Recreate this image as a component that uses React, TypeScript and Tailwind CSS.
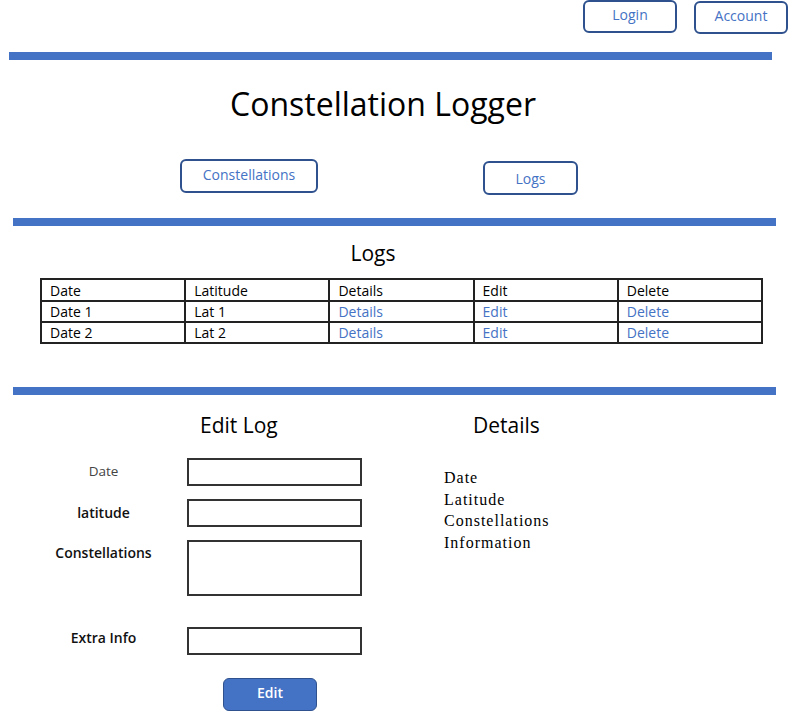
const BLUE = 'bg-[#4472c4]'

function OutlineButton({ label, className }: { label: string; className: string }) {
  return (
    <div
      className={`flex items-center justify-center rounded-[6px] border-2 border-[#2f528f] text-[14px] text-[#4472c4] ${className}`}
    >
      {label}
    </div>
  )
}

function Bar({ className }: { className: string }) {
  return <div className={`h-[8px] ${BLUE} ${className}`} />
}

const rows = [
  ['Date 1', 'Lat 1'],
  ['Date 2', 'Lat 2'],
]

function Field({ label, bold, tall, labelTop }: { label: string; bold?: boolean; tall?: boolean; labelTop: string }) {
  return (
    <div className="flex">
      <div
        className={`w-[187px] pl-[20px] text-center ${bold ? 'text-[14px] font-semibold text-[#111]' : 'text-[13.5px] text-[#444]'} ${labelTop}`}
      >
        {label}
      </div>
      <div className={`w-[175px] border-2 border-[#333] ${tall ? 'h-[56px]' : 'h-[28px]'}`} />
    </div>
  )
}

export default function App() {
  return (
    <div className="relative h-[714px] w-[791px] overflow-hidden bg-white font-['Open_Sans',sans-serif] text-black">
      {/* top account buttons */}
      <div className="flex pl-[583px]">
        <OutlineButton label="Login" className="mt-0 h-[33px] w-[94px] pb-[4px]" />
        <OutlineButton label="Account" className="ml-[17px] mt-[1px] h-[33px] w-[94px] pb-[4px]" />
      </div>

      <Bar className="ml-[9px] mt-[18px] w-[763px]" />

      <h1 className="mt-[24px] pr-[25px] text-center text-[32px] leading-[40px]">Constellation Logger</h1>

      <div className="mt-[35px] flex items-start">
        <OutlineButton label="Constellations" className="ml-[180px] h-[34px] w-[138px] pb-[4px]" />
        <OutlineButton label="Logs" className="ml-[165px] mt-[2px] h-[34px] w-[95px]" />
      </div>

      <Bar className="ml-[13px] mt-[23px] w-[763px]" />

      <h2 className="mt-[12px] pr-[45px] text-center text-[21px] leading-[30px]">Logs</h2>

      {/* logs table */}
      <table className="ml-[40px] mt-[10px] w-[723px] table-fixed border-collapse text-[14px] leading-[19px]">
        <tbody>
          <tr>
            {['Date', 'Latitude', 'Details', 'Edit', 'Delete'].map((h) => (
              <td key={h} className="border-2 border-[#222] px-[8px] pt-[1px]">
                {h}
              </td>
            ))}
          </tr>
          {rows.map(([d, l]) => (
            <tr key={d}>
              <td className="border-2 border-[#222] px-[8px]">{d}</td>
              <td className="border-2 border-[#222] px-[8px]">{l}</td>
              <td className="border-2 border-[#222] px-[8px] text-[#4472c4]">Details</td>
              <td className="border-2 border-[#222] px-[8px] text-[#4472c4]">Edit</td>
              <td className="border-2 border-[#222] px-[8px] text-[#4472c4]">Delete</td>
            </tr>
          ))}
        </tbody>
      </table>

      <Bar className="ml-[13px] mt-[43px] w-[763px]" />

      <div className="flex">
        {/* edit form */}
        <div className="w-[400px]">
          <h2 className="mt-[15px] pl-[200px] text-[21px] leading-[30px]">Edit Log</h2>
          <div className="mt-[18px] flex flex-col">
            <Field label="Date" labelTop="pt-[3px]" />
            <div className="mt-[13px]">
              <Field label="latitude" bold labelTop="pt-[3px]" />
            </div>
            <div className="mt-[13px]">
              <Field label="Constellations" bold labelTop="pt-[2px]" tall />
            </div>
            <div className="mt-[31px]">
              <Field label="Extra Info" bold labelTop="pt-0" />
            </div>
          </div>
          <div className="ml-[223px] mt-[23px] flex h-[33px] w-[94px] items-center justify-center rounded-[6px] border border-[#2f528f] bg-[#4472c4] pb-[4px] text-[14px] font-semibold text-white">
            Edit
          </div>
        </div>

        {/* details */}
        <div>
          <h2 className="mt-[15px] pl-[73px] text-[21px] leading-[30px]">Details</h2>
          <div className="ml-[44px] mt-[27px] font-['Liberation_Serif',serif] text-[16px] leading-[21.5px] tracking-[1px]">
            <div>Date</div>
            <div>Latitude</div>
            <div>Constellations</div>
            <div>Information</div>
          </div>
        </div>
      </div>
    </div>
  )
}
